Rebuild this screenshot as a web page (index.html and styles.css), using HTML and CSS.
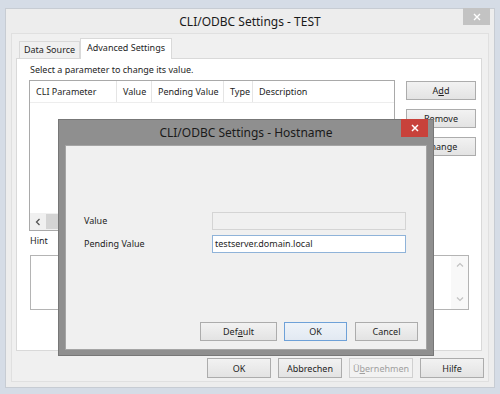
FILE: index.html
```html
<!DOCTYPE html>
<html>
<head>
<meta charset="utf-8">
<link rel="stylesheet" href="styles.css">
</head>
<body>
<div class="window">
  <div class="titlebar">
    <div class="title">CLI/ODBC Settings - TEST</div>
    <div class="close close-gray"><svg width="8" height="8" viewBox="0 0 8 8"><path d="M1 1L7 7M7 1L1 7" stroke="#fff" stroke-width="1.4"/></svg></div>
  </div>
  <div class="client">
    <div class="tabs">
      <div class="tab">Data Source</div>
      <div class="tab active">Advanced Settings</div>
    </div>
    <div class="panel">
      <div class="intro">Select a parameter to change its value.</div>
      <div class="listrow">
        <div class="list">
          <div class="lhead">
            <div class="col c1">CLI Parameter</div>
            <div class="col c2">Value</div>
            <div class="col c3">Pending Value</div>
            <div class="col c4">Type</div>
            <div class="col c5">Description</div>
          </div>
          <div class="lbody"></div>
          <div class="hscroll">
            <div class="sbtn"><svg width="6" height="8" viewBox="0 0 6 8"><path d="M4.5 1L1.5 4L4.5 7" fill="none" stroke="#555" stroke-width="1.3"/></svg></div>
            <div class="thumb"></div>
          </div>
        </div>
        <div class="sidebtns">
          <div class="btn side">A<u>d</u>d</div>
          <div class="btn side"><u>R</u>emove</div>
          <div class="btn side"><u>C</u>hange</div>
        </div>
      </div>
      <div class="hintlabel">Hint</div>
      <div class="hintbox">
        <div class="vscroll">
          <svg width="8" height="6" viewBox="0 0 8 6"><path d="M1 4.5L4 1.5L7 4.5" fill="none" stroke="#c2c2c2" stroke-width="1.2"/></svg>
          <svg width="8" height="6" viewBox="0 0 8 6"><path d="M1 1.5L4 4.5L7 1.5" fill="none" stroke="#c2c2c2" stroke-width="1.2"/></svg>
        </div>
      </div>
    </div>
    <div class="footer">
      <div class="btn foot">OK</div>
      <div class="btn foot">Abbrechen</div>
      <div class="btn foot disabled">Ü<u>b</u>ernehmen</div>
      <div class="btn foot">Hilfe</div>
    </div>
  </div>
</div>

<div class="modal">
  <div class="mtitlebar">
    <div class="mtitle">CLI/ODBC Settings - Hostname</div>
    <div class="close close-red"><svg width="8" height="8" viewBox="0 0 8 8"><path d="M1 1L7 7M7 1L1 7" stroke="#fff" stroke-width="1.5"/></svg></div>
  </div>
  <div class="mclient">
    <div class="fields">
      <div class="flabel">Value</div>
      <div class="fbox disabledbox"></div>
      <div class="flabel">Pending Value</div>
      <div class="fbox activebox">testserver.domain.local</div>
    </div>
    <div class="mbuttons">
      <div class="btn mdefault">Def<u>a</u>ult</div>
      <div class="btn mok">OK</div>
      <div class="btn mcancel">Cancel</div>
    </div>
  </div>
</div>
</body>
</html>
```

FILE: styles.css
```css
* { box-sizing: border-box; }
html, body { margin: 0; padding: 0; }
body {
  width: 500px;
  height: 394px;
  overflow: hidden;
  background: #d5dce6;
  font-family: "Noto Sans", "Liberation Sans", sans-serif;
  font-size: 9px;
  color: #1e1e1e;
  position: relative;
}
u { text-decoration: underline; text-underline-offset: 1px; }

.window {
  margin: 8px 5px 0;
  width: 490px;
  height: 380px;
  border: 1px solid #c7ccd3;
  background: #ededed;
  padding: 0 5px 5px 5px;
  display: flex;
  flex-direction: column;
}
.titlebar {
  height: 24px;
  display: grid;
  grid-template-columns: 1fr auto 1fr;
  align-items: start;
}
.title {
  grid-column: 2;
  font-size: 12px;
  line-height: 26px;
  color: #1a1a1a;
}
.close {
  grid-column: 3;
  justify-self: end;
  width: 27px;
  margin-top: -1px;
  margin-right: -1px;
  display: flex;
  align-items: center;
  justify-content: center;
}
.close-gray { height: 17px; background: #c3c3c3; }
.close-red { height: 18px; background: #c8423b; }

.client {
  flex: 1;
  background: #f0f0f0;
  border: 1px solid #e0e0e0;
  padding: 4px 6px 3px 4px;
  display: flex;
  flex-direction: column;
}
.tabs {
  height: 20px;
  display: flex;
  align-items: flex-end;
  padding-left: 3px;
  position: relative;
  z-index: 1;
}
.tab {
  width: 61px;
  height: 17px;
  border: 1px solid #d9d9d9;
  border-bottom: none;
  background: #f0f0f0;
  text-align: center;
  line-height: 16px;
  white-space: nowrap;
}
.tab.active {
  width: 92px;
  height: 21px;
  margin-bottom: -1px;
  background: #fff;
  line-height: 18px;
}
.panel {
  height: 293px;
  border: 1px solid #d9d9d9;
  background: #fff;
  padding: 4px 0 0 12px;
}
.intro {
  height: 14px;
  line-height: 14px;
  margin-left: 1px;
  margin-bottom: 3px;
}
.listrow {
  display: flex;
  align-items: flex-start;
}
.list {
  width: 366px;
  height: 151px;
  border: 1px solid #a9a9a9;
  display: flex;
  flex-direction: column;
}
.lhead {
  height: 22px;
  display: flex;
  border-bottom: 1px solid #ededed;
}
.col {
  border-right: 1px solid #e5e5e5;
  padding-left: 6px;
  line-height: 21px;
  white-space: nowrap;
}
.c1 { width: 87px; }
.c2 { width: 35px; }
.c3 { width: 72px; }
.c4 { width: 29px; }
.c5 { flex: 1; border-right: none; }
.lbody { flex: 1; }
.hscroll {
  height: 17px;
  display: flex;
  background: #f0f0f0;
}
.sbtn {
  width: 16px;
  display: flex;
  align-items: center;
  justify-content: center;
}
.thumb {
  width: 120px;
  margin: 1px 0;
  background: #d4d4d4;
}
.sidebtns {
  margin-left: 11px;
  padding-top: 1px;
  display: flex;
  flex-direction: column;
  gap: 9px;
}
.btn {
  border: 1px solid #acacac;
  background: linear-gradient(#f2f2f2, #e3e3e3);
  display: flex;
  align-items: center;
  justify-content: center;
  white-space: nowrap;
  color: #1e1e1e;
}
.side { width: 70px; height: 19px; }
.hintlabel {
  margin-top: 3px;
  margin-left: 1px;
  height: 14px;
  line-height: 14px;
}
.hintbox {
  margin-top: 7px;
  margin-left: 1px;
  width: 439px;
  height: 55px;
  border: 1px solid #b4b4b4;
  display: flex;
  justify-content: flex-end;
}
.vscroll {
  width: 17px;
  background: #f8f8f8;
  display: flex;
  flex-direction: column;
  align-items: center;
  justify-content: space-between;
  padding: 6px 0 7px;
}
.footer {
  margin-top: 7px;
  margin-right: -2px;
  display: flex;
  justify-content: flex-end;
  gap: 7px;
}
.foot { width: 64px; height: 20px; }
.disabled { color: #a0a0a0; border-color: #d0d0d0; background: #f2f2f2; }

.modal {
  position: absolute;
  left: 58px;
  top: 119px;
  width: 376px;
  height: 237px;
  background: #8f8f8f;
  border: 1px solid #777;
  padding: 0 6px 5px 6px;
  display: flex;
  flex-direction: column;
}
.mtitlebar {
  height: 25px;
  display: grid;
  grid-template-columns: 1fr auto 1fr;
  align-items: start;
}
.mtitle {
  grid-column: 2;
  font-size: 12px;
  line-height: 25px;
  color: #1a1a1a;
}
.mclient {
  flex: 1;
  background: #f0f0f0;
  border: 1px solid #a5a5a5;
  padding: 66px 8px 8px 18px;
  display: flex;
  flex-direction: column;
}
.fields {
  display: grid;
  grid-template-columns: 128px 194px;
  grid-auto-rows: 18px;
  row-gap: 5px;
}
.flabel { line-height: 18px; }
.fbox {
  border: 1px solid #c9c9c9;
  line-height: 16px;
  padding-left: 2px;
  white-space: nowrap;
}
.disabledbox { background: #f0f0f0; border-color: #d4d4d4; }
.activebox { background: #fff; border-color: #8fb3d9; }
.mbuttons {
  margin-top: auto;
  display: flex;
  justify-content: flex-end;
}
.mdefault { width: 77px; height: 19px; }
.mok { width: 63px; height: 19px; margin-left: 7px; border-color: #6ea1d8; background: linear-gradient(#eef3f9, #e2e9f2); }
.mcancel { width: 63px; height: 19px; margin-left: 8px; }
```
